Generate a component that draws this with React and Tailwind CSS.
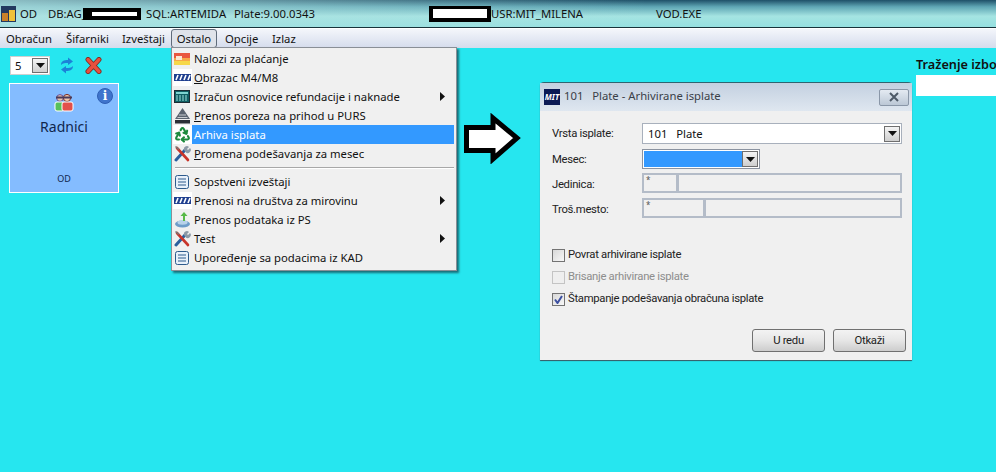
import { Recycle } from "lucide-react";

const font = "font-['Noto_Sans','Open_Sans',sans-serif]";
const narrow = "font-['Roboto','Liberation_Sans',sans-serif] text-[11.3px] tracking-[-0.3px]";

function Arrow() {
  return (
    <svg width="7" height="9" viewBox="0 0 7 9" className="absolute right-[8px] top-[5px]">
      <path d="M1 0 L6 4.5 L1 9 Z" fill="#111" />
    </svg>
  );
}

function DropBtn({ className }) {
  return (
    <div className={`flex shrink-0 items-center justify-center border border-[#6f6f6f] bg-gradient-to-b from-[#f4f4f4] to-[#cfcfcf] ${className}`}>
      <svg width="9" height="5" viewBox="0 0 9 5">
        <path d="M0 0 H9 L4.5 5 Z" fill="#111" />
      </svg>
    </div>
  );
}

function ListIcon() {
  return (
    <svg width="16" height="16" viewBox="0 0 16 16">
      <rect x="1.5" y="1.5" width="13" height="13" rx="2" fill="#e8f0fa" stroke="#2d5a8c" />
      <path d="M4 5 H12 M4 8 H12 M4 11 H12" stroke="#2d5a8c" strokeWidth="1.2" />
    </svg>
  );
}

function StripeIcon() {
  return (
    <div className="flex h-[17px] w-[19px] items-center justify-center bg-white">
      <svg width="17" height="7" viewBox="0 0 17 7">
        <rect width="17" height="7" fill="#1f3f8f" />
        <path d="M2 6 L4 1 M6 6 L8 1 M10 6 L12 1 M14 6 L16 1" stroke="#fff" strokeWidth="1.6" />
      </svg>
    </div>
  );
}

function ToolsIcon() {
  return (
    <svg width="17" height="17" viewBox="0 0 17 17">
      <path d="M2 15 L11 5" stroke="#2b5f9e" strokeWidth="3" strokeLinecap="round" />
      <path d="M3 3 L14 15" stroke="#c8342a" strokeWidth="2.6" strokeLinecap="round" />
      <path d="M1.5 1.5 L5 4.5" stroke="#777" strokeWidth="1.6" />
      <path d="M10 5 A3 3 0 0 1 15 2 L13 4 L14 5 L16 3 A3 3 0 0 1 11.5 7 Z" fill="#8c99a6" />
    </svg>
  );
}

const icons = {
  nalozi: (
    <svg width="16" height="12" viewBox="0 0 16 12">
      <rect width="16" height="5" fill="#e9573f" />
      <rect y="5" width="16" height="3" fill="#f7a748" />
      <rect y="8" width="16" height="4" fill="#f6d84a" />
      <rect x="2" y="3" width="6" height="4" fill="#fbe6d2" />
    </svg>
  ),
  stripe: <StripeIcon />,
  calc: (
    <svg width="16" height="13" viewBox="0 0 16 13">
      <rect x="0.5" y="0.5" width="15" height="12" fill="#0f5f63" stroke="#1c2b33" />
      <rect x="2" y="2" width="12" height="2" fill="#7fd4d0" />
      <path d="M2 6 H14 M2 8 H14 M2 10 H14" stroke="#9fe3df" strokeDasharray="2 1" />
    </svg>
  ),
  purs: (
    <svg width="17" height="17" viewBox="0 0 17 17">
      <path d="M8.5 1 L16 12 H1 Z" fill="#5b6470" />
      <path d="M5 8 H12 M3.5 10.5 H13.5" stroke="#c8ccd0" />
      <rect x="1" y="13" width="15" height="3.5" fill="#2b2f36" />
    </svg>
  ),
  recycle: (
    <div className="flex h-[19px] w-[19px] items-center justify-center bg-white">
      <Recycle size={17} strokeWidth={3} color="#1d8a3d" />
    </div>
  ),
  tools: <ToolsIcon />,
  list: <ListIcon />,
  transfer: (
    <svg width="17" height="17" viewBox="0 0 17 17">
      <ellipse cx="8.5" cy="13" rx="7.5" ry="3.5" fill="#6d9cc9" />
      <ellipse cx="8.5" cy="11.5" rx="5" ry="2.2" fill="#b7d2ea" />
      <path d="M9 10 V5 H6.5 L10 1 L13.5 5 H11 V10 Z" fill="#58b947" />
    </svg>
  ),
};

const topItems = [
  { icon: "nalozi", label: "Nalozi za plaćanje" },
  { icon: "stripe", mark: "O", label: "brazac M4/M8" },
  { icon: "calc", label: "Izračun osnovice refundacije i naknade", sub: true },
  { icon: "purs", mark: "P", label: "renos poreza na prihod u PURS" },
  { icon: "recycle", label: "Arhiva isplata", active: true },
  { icon: "tools", mark: "P", label: "romena podešavanja za mesec" },
];

const bottomItems = [
  { icon: "list", label: "Sopstveni izveštaji" },
  { icon: "stripe", label: "Prenosi na društva za mirovinu", sub: true },
  { icon: "transfer", label: "Prenos podataka iz PS" },
  { icon: "tools", label: "Test", sub: true },
  { icon: "list", label: "Upoređenje sa podacima iz KAD" },
];

function MenuRow({ item }) {
  return (
    <div className="relative flex h-[19px] items-center">
      <div className="flex h-[19px] w-[20px] shrink-0 items-center justify-center">{icons[item.icon]}</div>
      <div className={`flex h-[19px] flex-1 items-center pl-[2px] ${item.active ? "bg-[#3399ff] text-white" : "text-[#111]"}`}>
        {item.mark && <span className="underline">{item.mark}</span>}
        {item.label}
      </div>
      {item.sub && <Arrow />}
    </div>
  );
}

function Field({ label, first, className }) {
  return (
    <div className={`flex items-center ${className}`}>
      <div className={`w-[90px] shrink-0 pt-[4px] text-[#222] ${narrow}`}>{label}</div>
      <div className="flex h-[20px] w-[260px] shrink-0 border-2 border-[#b4bcc8]">
        <div className={`h-full border-r-[3px] border-[#b4bcc8] pl-[2px] text-[8px] leading-[10px] text-[#555] ${first}`}>*</div>
      </div>
    </div>
  );
}

function Check({ label, checked, disabled }) {
  return (
    <div className="flex h-[22px] items-center gap-[3px]">
      <div className={`flex h-[13px] w-[13px] items-center justify-center border ${disabled ? "border-[#c4c4c4] bg-[#efefef]" : "border-[#737373] bg-gradient-to-br from-[#d8d8d8] to-[#f8f8f8]"}`}>
        {checked && (
          <svg width="9" height="9" viewBox="0 0 9 9">
            <path d="M1 4.5 L3.5 8 L8 1" fill="none" stroke="#3c4fa0" strokeWidth="2" />
          </svg>
        )}
      </div>
      <span className={`${narrow} ${disabled ? "text-[#8d8d8d]" : "text-[#222]"}`}>{label}</span>
    </div>
  );
}

function Btn({ children }) {
  return (
    <div className={`flex h-[23px] w-[73px] items-center justify-center rounded-[3px] border border-[#707070] bg-gradient-to-b from-[#f3f3f3] via-[#e6e6e6] to-[#cdcdcd] text-[#222] ${narrow}`}>
      {children}
    </div>
  );
}

export default function App() {
  return (
    <div className={`${font} relative h-[472px] w-[996px] overflow-hidden bg-[#26e6ef] text-[11.3px] leading-none`}>
      {/* window title */}
      <div className="flex h-[28px] items-center border-b border-[#17323a] bg-[linear-gradient(90deg,rgba(175,225,225,0.75),rgba(175,225,225,0)_65%),linear-gradient(180deg,#1f5068_0%,#5fa6b4_25%,#a5e4e2_60%,#96e0e0_100%)] text-[#111]">
        <div className="ml-[1px] flex h-[16px] w-[15px] items-end gap-[1px] bg-[#23395f] p-[1px]">
          <div className="h-[8px] w-[6px] bg-[#c9812a]" />
          <div className="h-[11px] w-[6px] bg-[#f0c23a]" />
        </div>
        <span className="ml-[4px] w-[28px]">OD</span>
        <span className="w-[35px]">DB:AG_</span>
        <div className="flex h-[12px] w-[58px] items-center justify-center bg-black">
          <div className="ml-[4px] h-[4px] w-[45px] bg-white" />
        </div>
        <span className="ml-[5px] w-[88px]">SQL:ARTEMIDA</span>
        <span className="w-[195px]">Plate:9.00.0343</span>
        <div className="flex h-[16px] w-[62px] items-center justify-center bg-black">
          <div className="h-[9px] w-[54px] bg-white" />
        </div>
        <span className="w-[165px]">USR:MIT_MILENA</span>
        <span>VOD.EXE</span>
      </div>

      {/* menu bar */}
      <div className="flex h-[20px] items-center border-t border-white bg-gradient-to-b from-[#f4f6fb] to-[#d5dcec] pl-[6px] text-[#111]">
        <span className="w-[60px]">Obračun</span>
        <span className="w-[56px]">Šifarniki</span>
        <span className="w-[49px]">Izveštaji</span>
        <span className="flex h-[19px] w-[46px] items-center justify-center rounded-[3px] border border-[#5f6b7a] bg-[#dfe3ea]">Ostalo</span>
        <span className="ml-[8px] w-[47px]">Opcije</span>
        <span>Izlaz</span>
      </div>

      {/* desktop */}
      <div className="flex justify-between">
        <div className="pl-[9px] pt-[8px]">
          <div className="ml-[1px] flex items-center gap-[10px]">
            <div className="flex h-[19px] w-[40px] items-center justify-between border border-[#d0d0d0] bg-white pl-[4px] pr-[1px] text-[#111]">
              5
              <DropBtn className="h-[15px] w-[16px]" />
            </div>
            <div className="flex items-center gap-[11px]">
              <svg width="14" height="17" viewBox="0 0 14 17">
                <path d="M1 8 C1 4 4 3 8 3 V0.5 L13 4.5 L8 8 V6 C5 6 3 6 1 8 Z" fill="#1c82d8" />
                <path d="M13 9 C13 13 10 14 6 14 V16.5 L1 12.5 L6 9 V11 C9 11 11 11 13 9 Z" fill="#1c82d8" />
              </svg>
              <svg width="17" height="17" viewBox="0 0 17 17">
                <path d="M3 2.5 L14 14.5 M14 2.5 L3 14.5" stroke="#7d2a22" strokeWidth="5" strokeLinecap="round" />
                <path d="M3 2.5 L14 14.5 M14 2.5 L3 14.5" stroke="#e8503f" strokeWidth="3.4" strokeLinecap="round" />
              </svg>
            </div>
          </div>
          <div className="relative mt-[8px] flex h-[110px] w-[110px] flex-col items-center border border-white bg-[#84bcff] text-[#10264d]">
            <svg width="20" height="19" viewBox="0 0 20 19" className="mt-[9px]">
              <circle cx="6" cy="5" r="3.4" fill="#e9c3a8" stroke="#5c4da0" />
              <rect x="1" y="9" width="9" height="9" rx="2" fill="#58c05a" stroke="#fff" />
              <circle cx="13" cy="5" r="3.6" fill="#efc6aa" stroke="#7a2d22" />
              <rect x="8" y="9" width="11" height="9" rx="2" fill="#e2504a" stroke="#fff" />
              <rect x="2" y="3.5" width="16" height="2" fill="#4a3a5a" />
            </svg>
            <span className="mt-[6px] text-[14px] leading-[18px]">Radnici</span>
            <span className="mt-auto mb-[8px] text-[9px] leading-[11px]">OD</span>
            <div className="absolute right-[5px] top-[4px] flex h-[16px] w-[16px] items-center justify-center rounded-full border border-[#2f5fb5] bg-[#3f74cc] font-['DejaVu_Serif',serif] text-[12px] font-bold text-white">
              i
            </div>
          </div>
        </div>
        <div className="w-[80px] pt-[9px]">
          <div className="whitespace-nowrap text-[12.7px] font-semibold leading-[15px] text-[#111]">Traženje izbo</div>
          <div className="mt-[3px] h-[21px] bg-white" />
        </div>
      </div>

      {/* open menu */}
      <div className="absolute left-[171px] top-[47px] w-[286px] border border-[#8a8f96] bg-[#f0f0f0] pb-[3px] pt-[1px] pr-[2px] shadow-[2px_2px_2px_rgba(20,60,70,0.7)]">
        {topItems.map((item) => (
          <MenuRow key={item.label} item={item} />
        ))}
        <div className="mb-[3px] ml-[3px] mt-[4px] h-[2px] border-t border-[#a8a8a8] bg-white" />
        {bottomItems.map((item) => (
          <MenuRow key={item.label} item={item} />
        ))}
      </div>

      {/* arrow between menu and dialog */}
      <svg width="58" height="51" viewBox="0 0 58 51" className="absolute left-[464px] top-[113px]">
        <path d="M2.5 14.5 H29 V5 L53 25 L29 46 V37.5 H2.5 Z" fill="#fff" stroke="#000" strokeWidth="5" />
      </svg>

      {/* dialog */}
      <div className="absolute left-[540px] top-[82px] h-[278px] w-[372px] rounded-t-[4px] border-t border-[#2f6470] bg-[#f0f0f0] shadow-[0_1px_1px_#3a5560]">
        <div className="flex h-[28px] items-center bg-gradient-to-b from-[#c3d0e0] to-[#dfe7f0] pl-[4px] pr-[3px]">
          <div className="flex h-[16px] w-[16px] items-center justify-center bg-[#0b1a55] text-[8px] font-bold italic text-white">MIT</div>
          <span className="ml-[4px] pb-[2px] text-[#3a4048]">101&nbsp;&nbsp; Plate - Arhivirane isplate</span>
          <div className="ml-auto flex h-[17px] w-[30px] items-center justify-center rounded-[2px] border border-[#8a97a8] bg-gradient-to-b from-[#e4eaf2] to-[#bcc8d6]">
            <svg width="12" height="10" viewBox="0 0 12 10">
              <path d="M2 1 L10 9 M10 1 L2 9" stroke="#4e5a68" strokeWidth="2" />
            </svg>
          </div>
        </div>

        <div className="px-[12px] pt-[12px]">
          <div className="flex items-center">
            <div className={`w-[90px] shrink-0 text-[#222] ${narrow}`}>Vrsta isplate:</div>
            <div className="flex h-[21px] w-[260px] shrink-0 items-center justify-between border border-[#a8b0bc] bg-white pl-[5px] pr-[1px] text-[#111]">
              101&nbsp;&nbsp; Plate
              <DropBtn className="h-[16px] w-[16px]" />
            </div>
          </div>
          <div className="mt-[5px] flex items-center">
            <div className={`w-[90px] shrink-0 pt-[2px] text-[#222] ${narrow}`}>Mesec:</div>
            <div className="flex h-[20px] w-[118px] shrink-0 items-center border border-[#8b93a0] bg-white p-[1px]">
              <div className="h-full flex-1 bg-[#3399ff]" />
              <DropBtn className="h-full w-[16px]" />
            </div>
          </div>
          <Field label="Jedinica:" first="w-[35px]" className="mt-[4px]" />
          <Field label="Troš.mesto:" first="w-[62px]" className="mt-[5px]" />

          <div className="mt-[26px]">
            <Check label="Povrat arhivirane isplate" />
            <Check label="Brisanje arhivirane isplate" disabled />
            <Check label="Štampanje podešavanja obračuna isplate" checked />
          </div>

          <div className="mr-[-6px] mt-[19px] flex justify-end gap-[8px]">
            <Btn>U redu</Btn>
            <Btn>Otkaži</Btn>
          </div>
        </div>
      </div>
    </div>
  );
}
